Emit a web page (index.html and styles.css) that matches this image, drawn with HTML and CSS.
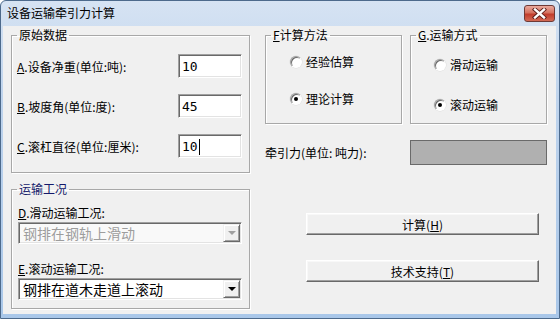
FILE: index.html
```html
<!DOCTYPE html>
<html lang="zh-CN">
<head>
    <meta charset="UTF-8" />
    <title>设备运输牵引力计算</title>
    <link rel="stylesheet" href="styles.css">
</head>
<body>

<div class="window">
    <!-- Title bar -->
    <div class="titlebar">
        <span class="title">设备运输牵引力计算</span>
        <button class="close" title="关闭">
            <svg width="15" height="11" viewBox="0 0 15 11">
                <path d="M3 1.5 L12 9.5 M12 1.5 L3 9.5" stroke="#5a1c17" stroke-width="4.2" stroke-linecap="square"/>
                <path d="M3 1.5 L12 9.5 M12 1.5 L3 9.5" stroke="#fff" stroke-width="2.4" stroke-linecap="square"/>
            </svg>
        </button>
    </div>

    <!-- Client area -->
    <div class="client">
        <div class="left-col">
            <fieldset class="group group-input">
                <legend>原始数据</legend>
                <div class="group-body">
                    <div class="field-row">
                        <label><u>A</u>.设备净重(单位:吨):</label>
                        <div class="edit">10</div>
                    </div>
                    <div class="field-row">
                        <label><u>B</u>.坡度角(单位:度):</label>
                        <div class="edit">45</div>
                    </div>
                    <div class="field-row">
                        <label><u>C</u>.滚杠直径(单位:厘米):</label>
                        <div class="edit">10<span class="caret"></span></div>
                    </div>
                </div>
            </fieldset>

            <fieldset class="group group-cond">
                <legend class="legend-blue">运输工况</legend>
                <div class="group-body">
                    <label class="combo-label"><u>D</u>.滑动运输工况:</label>
                    <div class="combo disabled">
                        <span class="combo-text">钢排在钢轨上滑动</span>
                        <span class="combo-btn"><span class="arrow"></span></span>
                    </div>
                    <label class="combo-label second"><u>E</u>.滚动运输工况:</label>
                    <div class="combo">
                        <span class="combo-text">钢排在道木走道上滚动</span>
                        <span class="combo-btn"><span class="arrow"></span></span>
                    </div>
                </div>
            </fieldset>
        </div>

        <div class="right-col">
            <div class="group-row">
                <fieldset class="group group-method">
                    <legend><u>F</u>计算方法</legend>
                    <div class="group-body">
                        <div class="radio"><span class="dot"></span>经验估算</div>
                        <div class="radio checked"><span class="dot"></span>理论计算</div>
                    </div>
                </fieldset>
                <fieldset class="group group-mode">
                    <legend><u>G</u>.运输方式</legend>
                    <div class="group-body">
                        <div class="radio"><span class="dot"></span>滑动运输</div>
                        <div class="radio checked"><span class="dot"></span>滚动运输</div>
                    </div>
                </fieldset>
            </div>

            <div class="result-row">
                <span>牵引力(单位: 吨力):</span>
                <div class="result-box"></div>
            </div>

            <button class="push first">计算(<u>H</u>)</button>
            <button class="push">技术支持(<u>T</u>)</button>
        </div>
    </div>
</div>

</body>
</html>
```

FILE: styles.css
```css
* {
    box-sizing: border-box;
}

body {
    margin: 0;
    font-family: "Noto Sans CJK SC", "DejaVu Sans", sans-serif;
    font-size: 12px;
    color: #000;
    background: #fff;
}

/* Window frame */
.window {
    width: 560px;
    height: 319px;
    display: flex;
    flex-direction: column;
    padding: 0 3px 4px 2px;
    border: 1px solid #4d6a8c;
    border-radius: 6px 6px 0 0;
    background: linear-gradient(to bottom, #d6e3f3, #bfd4ed 30%, #a9c7e9);
}

.titlebar {
    height: 25px;
    display: flex;
    justify-content: space-between;
    align-items: flex-start;
    padding-left: 4px;
}

.title {
    line-height: 23px;
    font-size: 12px;
}

.close {
    width: 31px;
    height: 17px;
    margin: 4px 1px 0 0;
    padding: 0;
    border: 1px solid #6e3a36;
    border-radius: 3px;
    background: linear-gradient(to bottom, #eaa99d, #d5725f 45%, #c23d2c 55%, #d26a55);
    display: flex;
    align-items: center;
    justify-content: center;
}

/* Client area */
.client {
    flex: 1;
    background: #f0f0f0;
    display: grid;
    grid-template-columns: 239px 282px;
    column-gap: 15px;
    padding: 2px 0 0 8px;
}

/* Group boxes */
.group {
    margin: 0;
    padding: 0;
    border: 1px solid #a8a8a8;
    box-shadow: 1px 1px 0 #fff, inset 1px 1px 0 #fff;
    min-width: 0;
}

.group legend {
    margin-left: 5px;
    padding: 0 2px;
    line-height: 14px;
}

.legend-blue {
    color: #14196a;
}

.left-col {
    display: flex;
    flex-direction: column;
    gap: 9px;
}

.group-input .group-body {
    padding: 12px 7px 14px 5px;
    display: flex;
    flex-direction: column;
    gap: 16px;
}

.field-row {
    display: flex;
    justify-content: space-between;
    align-items: center;
    height: 24px;
}

.edit {
    width: 64px;
    height: 24px;
    background: #fff;
    border: 1px solid;
    border-color: #a0a0a0 #fff #fff #a0a0a0;
    box-shadow: inset 1px 1px 0 #696969, inset -1px -1px 0 #e3e3e3;
    padding: 2px 0 0 3px;
    font-family: "DejaVu Sans Mono", monospace;
    font-size: 13px;
    line-height: 18px;
    display: flex;
    align-items: center;
}

.caret {
    display: inline-block;
    width: 1px;
    height: 16px;
    margin-left: 1px;
    background: #000;
}

/* Combo boxes */
.group-cond .group-body {
    padding: 10px 7px 8px 6px;
}

.combo-label {
    display: block;
    line-height: 14px;
    margin-bottom: 2px;
}

.combo-label.second {
    margin-top: 18px;
}

.combo {
    height: 22px;
    display: flex;
    align-items: stretch;
    background: #fff;
    border: 1px solid;
    border-color: #a0a0a0 #fff #fff #a0a0a0;
    box-shadow: inset 1px 1px 0 #696969, inset -1px -1px 0 #e3e3e3;
    padding: 1px;
}

.combo-text {
    flex: 1;
    font-size: 14px;
    line-height: 18px;
    padding-left: 3px;
}

.combo-btn {
    width: 17px;
    background: #f0f0f0;
    border: 1px solid;
    border-color: #f0f0f0 #696969 #696969 #f0f0f0;
    box-shadow: inset 1px 1px 0 #fff, inset -1px -1px 0 #a0a0a0;
    display: flex;
    align-items: center;
    justify-content: center;
}

.arrow {
    width: 0;
    height: 0;
    border-left: 4px solid transparent;
    border-right: 4px solid transparent;
    border-top: 4px solid #000;
}

.combo.disabled {
    background: #f9f9f9;
}

.combo.disabled .combo-text {
    color: #9d9d9d;
}

.combo.disabled .arrow {
    border-top-color: #a0a0a0;
}

/* Right column */
.right-col {
    display: flex;
    flex-direction: column;
    align-items: flex-start;
}

.group-row {
    display: flex;
    gap: 8px;
    width: 100%;
}

.group-row .group {
    flex: 1;
}

.group-method .group-body {
    padding: 13px 0 17px 24px;
    display: flex;
    flex-direction: column;
    gap: 23px;
}

.group-mode .group-body {
    padding: 16px 0 11px 23px;
    display: flex;
    flex-direction: column;
    gap: 26px;
}

.radio {
    display: flex;
    align-items: center;
    gap: 4px;
    line-height: 14px;
}

.dot {
    width: 12px;
    height: 12px;
    border-radius: 50%;
    background: #fff;
    border: 1px solid;
    border-color: #a0a0a0 #fff #fff #a0a0a0;
    box-shadow: inset 1px 1px 0 #696969, 0 0 0 0.5px #dcdcdc;
    display: flex;
    align-items: center;
    justify-content: center;
}

.radio.checked .dot::after {
    content: "";
    width: 4px;
    height: 4px;
    border-radius: 50%;
    background: #000;
}

.result-row {
    width: 100%;
    margin-top: 16px;
    display: flex;
    justify-content: space-between;
    align-items: center;
}

.result-box {
    width: 137px;
    height: 25px;
    background: #b0b0b0;
    border: 1px solid #6a6a6a;
}

.push {
    width: 233px;
    height: 22px;
    margin: 25px 0 0 41px;
    padding: 0;
    font-family: inherit;
    font-size: 12px;
    background: #f0f0f0;
    border: 1px solid;
    border-color: #fff #696969 #696969 #fff;
    box-shadow: inset -1px -1px 0 #a0a0a0, inset 1px 1px 0 #f8f8f8;
}

.push.first {
    margin-top: 48px;
}
```
